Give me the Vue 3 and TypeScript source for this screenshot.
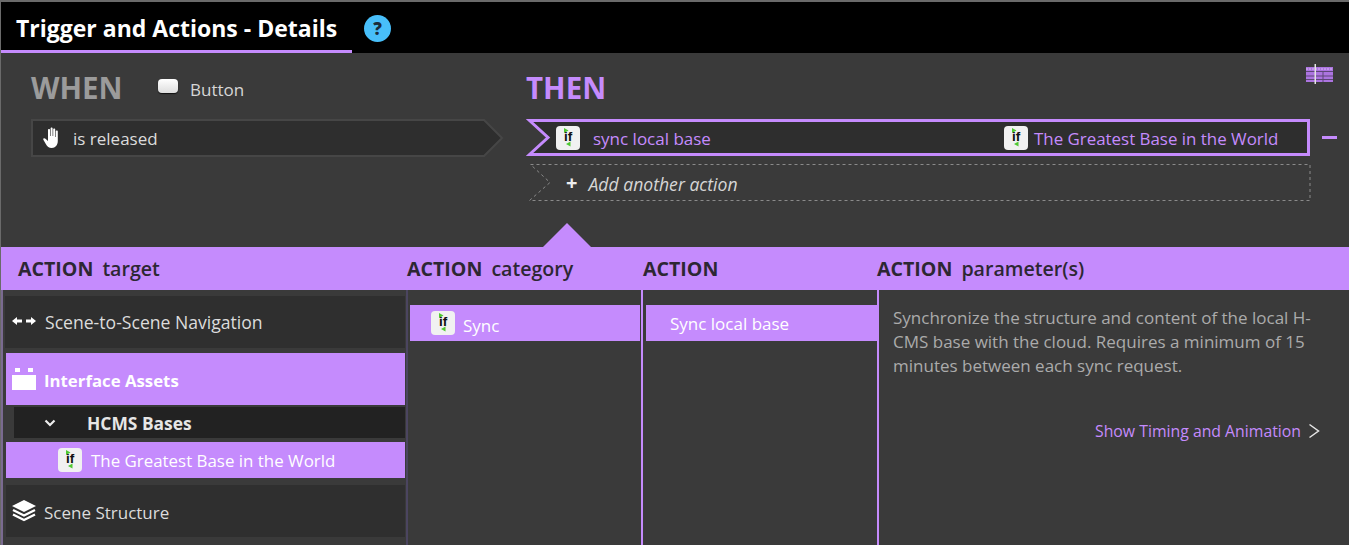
<script setup lang="ts">
const headers = [
  { key: 'target', strong: 'ACTION', rest: 'target' },
  { key: 'category', strong: 'ACTION', rest: 'category' },
  { key: 'action', strong: 'ACTION', rest: '' },
  { key: 'parameter', strong: 'ACTION', rest: 'parameter(s)' },
]
</script>

<template>
  <div class="page">
    <header class="topbar">
      <div class="tab">Trigger and Actions - Details</div>
      <div class="help">?</div>
    </header>

    <section class="rule">
      <div class="when">
        <div class="heading-row">
          <h2 class="heading when-title">WHEN</h2>
          <span class="button-icon"></span>
          <span class="button-label">Button</span>
        </div>
        <div class="trigger">
          <svg class="chev-bg" width="473" height="38" viewBox="0 0 473 38">
            <path d="M1 1H453L471 19L453 37H1Z" fill="#2e2e2e" stroke="#464646" stroke-width="2" />
          </svg>
          <svg class="hand" width="20" height="22" viewBox="0 0 20 22">
            <path fill="#fff" d="M7 2c.6 0 1 .4 1 1v6h.6V1.600c0-.6.5-1 1-1s1 .4 1 1V9h.6V2.400c0-.6.5-1 1-1s1 .4 1 1V10h.6V4.500c0-.6.4-1 1-1s1 .4 1 1V14c0 4-2.500 7-6 7-3 0-4.500-1.500-6-4L1.500 13c-.4-.7-.2-1.400.3-1.700.6-.3 1.200-.1 1.700.5L6 14V3c0-.6.400-1 1-1z" />
          </svg>
          <span class="trigger-text">is released</span>
        </div>
      </div>

      <div class="then">
        <h2 class="heading then-title">THEN</h2>
        <div class="action-line">
          <div class="action">
            <svg class="chev-bg" width="785" height="37" viewBox="0 0 785 37">
              <path d="M3.500 1.500H782.500V35.500H3.500L22 18.500Z" fill="#2e2e2e" stroke="#c58bfd" stroke-width="3" />
            </svg>
            <svg class="if-icon icon-first" width="24" height="24" viewBox="0 0 24 24">
              <rect width="24" height="24" rx="4" fill="#f1f1f1" />
              <path d="M8 2L12.500 4.500L8 7Z" fill="#4fc832" />
              <path d="M14.500 15.500L10 18L14.500 20.500Z" fill="#4fc832" />
              <text x="12" y="15" class="if-text">if</text>
            </svg>
            <span class="action-name">sync local base</span>
            <svg class="if-icon icon-second" width="24" height="24" viewBox="0 0 24 24">
              <rect width="24" height="24" rx="4" fill="#f1f1f1" />
              <path d="M8 2L12.500 4.500L8 7Z" fill="#4fc832" />
              <path d="M14.500 15.500L10 18L14.500 20.500Z" fill="#4fc832" />
              <text x="12" y="15" class="if-text">if</text>
            </svg>
            <span class="action-target">The Greatest Base in the World</span>
          </div>
          <span class="minus"></span>
        </div>
        <div class="add">
          <svg class="chev-bg" width="785" height="37" viewBox="0 0 785 37">
            <path d="M4.500 .5H784V36.500H3.500L24 18.500Z" fill="none" stroke="#8a8a8a" stroke-width="1" stroke-dasharray="3 3" />
          </svg>
          <span class="plus">+</span>
          <span class="add-text">Add another action</span>
        </div>
      </div>

      <svg class="timeline" width="28" height="20" viewBox="0 0 28 20">
        <rect x="0" y="3" width="27" height="15" fill="#ac74e0" />
        <path d="M0 7.500H27M0 12H27M0 15.500H27M17 8V18" stroke="#5e4678" stroke-width="1" />
        <path d="M0 5H27" stroke="#d9b8f8" stroke-width="1" stroke-dasharray="2 1" />
        <rect x="8.500" y="0" width="1.500" height="20" fill="#e4e4e4" />
      </svg>
    </section>

    <section class="detail">
      <div class="pointer"></div>
      <div class="band">
        <div v-for="h in headers" :key="h.key" class="band-cell" :class="'band-' + h.key">
          <strong>{{ h.strong }}</strong><span v-if="h.rest">{{ h.rest }}</span>
        </div>
      </div>
      <div class="columns">
        <div class="col col-target">
          <div class="item item-dark first">
            <svg class="item-icon arrows" width="24" height="10" viewBox="0 0 24 10">
              <path fill="#fff" d="M0 5L5 1V3.500H10V6.500H5V9ZM24 5L19 1V3.500H14V6.500H19V9Z" />
            </svg>
            <span class="nav-label">Scene-to-Scene Navigation</span>
          </div>
          <div class="item item-active">
            <svg class="item-icon" width="24" height="22" viewBox="0 0 24 22">
              <path fill="#fff" d="M3 0H8V4H3ZM16 0H21V4H16ZM0 7H24V22H0Z" />
            </svg>
            <b class="nudge">Interface Assets</b>
          </div>
          <div class="subhead">
            <svg width="12" height="8" viewBox="0 0 12 8">
              <path d="M1.500 1.500L6 6L10.500 1.500" fill="none" stroke="#eee" stroke-width="2.200" />
            </svg>
            <b>HCMS Bases</b>
          </div>
          <div class="subitem">
            <svg class="if-icon" width="24" height="24" viewBox="0 0 24 24">
              <rect width="24" height="24" rx="4" fill="#f1f1f1" />
              <path d="M8 2L12.500 4.500L8 7Z" fill="#4fc832" />
              <path d="M14.500 15.500L10 18L14.500 20.500Z" fill="#4fc832" />
              <text x="12" y="15" class="if-text">if</text>
            </svg>
            <span>The Greatest Base in the World</span>
          </div>
          <div class="item item-dark last">
            <svg class="item-icon" width="24" height="22" viewBox="0 0 24 22">
              <path fill="#fff" d="M12 0L24 6L12 12L0 6Z" />
              <path fill="none" stroke="#fff" stroke-width="2.400" d="M1 10L12 15.500L23 10M1 14.500L12 20L23 14.500" />
            </svg>
            <span class="nudge">Scene Structure</span>
          </div>
        </div>

        <div class="col col-category">
          <div class="choice">
            <svg class="if-icon" width="24" height="24" viewBox="0 0 24 24">
              <rect width="24" height="24" rx="4" fill="#f1f1f1" />
              <path d="M8 2L12.500 4.500L8 7Z" fill="#4fc832" />
              <path d="M14.500 15.500L10 18L14.500 20.500Z" fill="#4fc832" />
              <text x="12" y="15" class="if-text">if</text>
            </svg>
            <span class="sync-label">Sync</span>
          </div>
        </div>

        <div class="col col-action">
          <div class="choice choice-action">Sync local base</div>
        </div>

        <div class="col col-parameter">
          <p class="desc">Synchronize the structure and content of the local H-CMS base with the cloud. Requires a minimum of 15 minutes between each sync request.</p>
          <div class="timing">
            <span>Show Timing and Animation</span>
            <svg width="12" height="16" viewBox="0 0 12 16">
              <path d="M1.500 1.500L10.500 8L1.500 14.500" fill="none" stroke="#e6e6e6" stroke-width="1.500" />
            </svg>
          </div>
        </div>
      </div>
    </section>
  </div>
</template>

<style>
html, body { margin: 0; background: #3a3a3a; }
</style>

<style scoped>
.page {
  width: 1349px;
  height: 545px;
  overflow: hidden;
  box-sizing: border-box;
  border-top: 2px solid #6a6a6a;
  border-left: 1px solid #6a6a6a;
  background: #3a3a3a;
  font-family: "Open Sans", "Noto Sans", sans-serif;
  font-size: 17px;
  color: #d6d6d6;
  display: flex;
  flex-direction: column;
}
.topbar {
  height: 51px;
  flex: none;
  background: #000;
  display: flex;
  align-items: flex-start;
}
.tab {
  width: 351px;
  height: 51px;
  box-sizing: border-box;
  border-bottom: 3px solid #c58bfd;
  padding: 9px 0 0 15px;
  color: #fff;
  font-size: 23px;
  line-height: 34px;
  font-weight: 700;
  white-space: nowrap;
}
.help {
  width: 27px;
  height: 27px;
  margin: 13px 0 0 12px;
  border-radius: 50%;
  background: #48bffa;
  color: #1b2c3a;
  font-size: 17px;
  font-weight: 800;
  line-height: 27px;
  text-align: center;
}
.rule {
  position: relative;
  height: 194px;
  flex: none;
  display: flex;
  padding-left: 30px;
}
.when { width: 495px; flex: none; padding-top: 18px; }
.then { width: 800px; flex: none; padding-top: 18px; }
.heading-row { display: flex; align-items: center; height: 34px; }
.heading {
  margin: 0;
  font-size: 29.5px;
  line-height: 34px;
  height: 34px;
  font-weight: 700;
}
.when-title { color: #9b9b9b; width: 127px; }
.then-title { color: #c58bfd; }
.button-icon {
  width: 20px;
  height: 14px;
  margin-top: -4px;
  border-radius: 4px;
  background: linear-gradient(#fff, #ddd);
  box-shadow: 0 1px 1px #111;
}
.button-label { margin-left: 12px; font-size: 17px; color: #d6d6d6; margin-top: 3px; }
.trigger {
  position: relative;
  width: 473px;
  height: 38px;
  margin-top: 14px;
  display: flex;
  align-items: center;
}
.chev-bg { position: absolute; left: 0; top: 0; }
.hand { position: relative; margin-left: 11px; }
.trigger-text { position: relative; margin-left: 11px; color: #dcdcdc; }
.action-line {
  display: flex;
  align-items: center;
  margin-top: 14px;
  height: 37px;
}
.action {
  position: relative;
  width: 785px;
  height: 37px;
  display: flex;
  align-items: center;
  flex: none;
}
.icon-first { position: relative; margin-left: 30px; }
.icon-second { position: relative; }
.action-name { position: relative; color: #c58bfd; margin-left: 13px; width: 411px; white-space: nowrap; padding-top: 2px; }
.action-target { position: relative; color: #c58bfd; margin-left: 6px; white-space: nowrap; font-size: 16.9px; padding-top: 2px; }
.minus { flex: none; width: 15px; height: 3px; margin-left: 11px; background: #c58bfd; }
.add {
  position: relative;
  width: 785px;
  height: 37px;
  margin-top: 8px;
  display: flex;
  align-items: center;
}
.plus {
  position: relative;
  margin-left: 40px;
  color: #eee;
  font-size: 20px;
  font-weight: 700;
  line-height: 20px;
}
.add-text { position: relative; margin-left: 11px; font-style: italic; color: #d6d6d6; font-size: 17.6px; padding-top: 2px; }
.timeline { position: absolute; left: 1305px; top: 11px; }
.if-icon { flex: none; }
.if-text {
  font-family: "Liberation Sans", sans-serif;
  font-size: 13.5px;
  font-weight: 700;
  fill: #111;
  text-anchor: middle;
}
.detail { position: relative; flex: 1; min-height: 0; display: flex; flex-direction: column; }
.pointer {
  position: absolute;
  left: 542px;
  top: -24px;
  width: 48px;
  height: 24px;
  background: #c58bfd;
  clip-path: polygon(50% 0, 100% 100%, 0 100%);
}
.band {
  height: 43px;
  flex: none;
  background: #c58bfd;
  display: flex;
  align-items: center;
  color: #2d2733;
  font-size: 19.6px;
}
.band-cell { white-space: nowrap; }
.band-cell strong { font-weight: 700; margin-right: 9px; }
.band-cell span { font-weight: 600; }
.band-target { width: 389px; padding-left: 17px; }
.band-category { width: 236px; }
.band-action { width: 234px; }
.columns { flex: 1; min-height: 0; display: flex; }
.col { box-sizing: border-box; flex: none; height: 255px; }
.col-target {
  width: 407px;
  border-right: 2px solid #4b4560;
  padding: 6px 0 0 3px;
  border-left: 2px solid #7a6a90;
}
.item {
  height: 52px;
  display: flex;
  align-items: center;
  box-sizing: border-box;
}
.item-icon { flex: none; margin: 0 8px 0 6px; }
.arrows { margin: 0 9px 3px 7px; }
.nudge { padding-top: 2px; }
.nav-label { font-size: 17.6px; }
.item-dark { background: #2f2f2f; color: #dcdcdc; }
.item.first { margin-left: -1px; margin-right: 1px; width: 400px; }
.item-active { background: #c58bfd; color: #fff; margin-top: 5px; margin-right: 1px; font-size: 16.8px; }
.subhead {
  height: 31px;
  margin: 2px 1px 0 8px;
  background: #222;
  display: flex;
  align-items: center;
  color: #e6e6e6;
  font-size: 17.4px;
}
.subhead svg { margin: 0 31px 0 30px; flex: none; }
.subitem {
  height: 36px;
  margin: 4px 1px 0 0;
  background: #c58bfd;
  color: #fff;
  display: flex;
  align-items: center;
  font-size: 16.9px;
}
.subitem .if-icon { margin: 0 9px 0 52px; }
.last { margin-top: 7px; margin-right: 1px; }
.col-category {
  width: 235px;
  border-right: 2px solid #c58bfd;
  padding: 15px 1px 0 2px;
}
.choice {
  height: 36px;
  background: #c58bfd;
  color: #fff;
  display: flex;
  align-items: center;
}
.choice .if-icon { margin: 0 8px 0 21px; }
.sync-label { padding-top: 4px; }
.col-action {
  width: 236px;
  border-right: 2px solid #c58bfd;
  padding: 15px 0 0 3px;
}
.choice-action { padding-left: 24px; }
.col-parameter { width: 470px; padding: 16px 29px 0 14px; color: #a9a9a9; }
.desc { margin: 0; width: 428px; font-size: 17px; line-height: 24px; color: #ababab; }
.timing {
  margin-top: 42px;
  display: flex;
  justify-content: flex-end;
  align-items: center;
  gap: 7px;
  color: #c58bfd;
  font-size: 15.8px;
}
</style>
